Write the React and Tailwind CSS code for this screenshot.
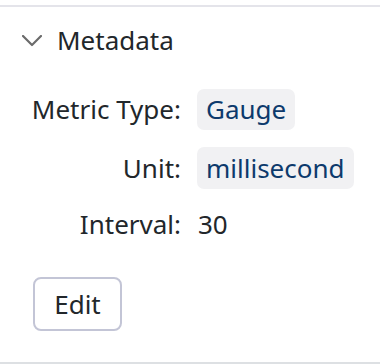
export default function App() {
  return (
    <div
      className="w-[380px] h-[364px] bg-white pt-[5px] overflow-hidden"
      style={{ fontFamily: '"Noto Sans", sans-serif' }}
    >
      <div className="h-[359px] border-t-2 border-b-2 border-t-[#e4e4ea] border-b-[#dde0e3] flex flex-col">
        <div className="flex items-center h-[35px] mt-[16px] pl-[22px] gap-[15px]">
          <svg width="20" height="12" viewBox="0 0 20 12" className="shrink-0">
            <path d="M1 1 L10 10 L19 1" fill="none" stroke="#6b6b6b" strokeWidth="2.2" strokeLinecap="round" strokeLinejoin="round" />
          </svg>
          <span className="text-[26px] leading-[35px] text-[#22272b]">Metadata</span>
        </div>
        <div className="mt-[31px] pl-[35px] grid grid-cols-[146px_auto] gap-x-[16px] items-center justify-start text-[26px] leading-[35px] text-[#22272b]">
          <div className="text-right whitespace-nowrap flex justify-end">Metric Type:</div>
          <div className="h-[41px] flex items-center">
            <span className="h-[41px] flex items-center px-[9px] rounded-[7px] bg-[#f1f1f3] text-[#0d3a6c]">Gauge</span>
          </div>
          <div className="text-right mt-[17px]">Unit:</div>
          <div className="h-[42px] flex items-center mt-[17px]">
            <span className="h-[42px] flex items-center px-[9px] rounded-[7px] bg-[#f1f1f3] text-[#0d3a6c]">millisecond</span>
          </div>
          <div className="text-right mt-[18px]">Interval:</div>
          <div className="mt-[18px] pl-[1px]">30</div>
        </div>
        <div className="pl-[33px] mt-[35px]">
          <button className="w-[89px] h-[54px] border-2 border-[#c3c5d6] rounded-[8px] text-[26px] leading-[35px] text-[#22272b] bg-white">
            Edit
          </button>
        </div>
      </div>
    </div>
  );
}
